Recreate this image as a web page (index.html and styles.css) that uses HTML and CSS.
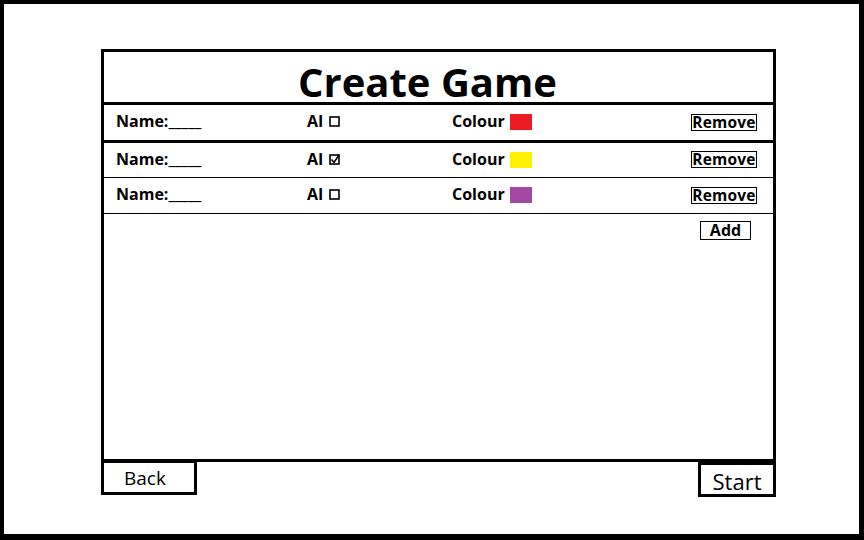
FILE: index.html
```html
<!DOCTYPE html>
<html>
<head>
<meta charset="utf-8">
<link rel="stylesheet" href="styles.css">
</head>
<body>
<div class="frame">
  <div class="panel">
    <div class="header"><h1 class="title">Create Game</h1></div>
    <div class="row row-first">
      <span class="name">Name:_____</span>
      <span class="ai">AI <svg class="cb" width="11" height="11" viewBox="0 0 11 11"><rect x="1" y="1" width="9" height="9" fill="none" stroke="#000" stroke-width="1.6"/></svg></span>
      <span class="colour">Colour <span class="swatch swatch-red"></span></span>
      <span class="btn-remove">Remove</span>
    </div>
    <div class="row row-second">
      <span class="name">Name:_____</span>
      <span class="ai">AI <svg class="cb" width="11" height="11" viewBox="0 0 11 11"><rect x="1" y="1" width="9" height="9" fill="none" stroke="#000" stroke-width="1.6"/><path d="M2.5 5.5 L5 8.5 L10 1" fill="none" stroke="#000" stroke-width="1.6"/></svg></span>
      <span class="colour">Colour <span class="swatch swatch-yellow"></span></span>
      <span class="btn-remove">Remove</span>
    </div>
    <div class="row row-third">
      <span class="name">Name:_____</span>
      <span class="ai">AI <svg class="cb" width="11" height="11" viewBox="0 0 11 11"><rect x="1" y="1" width="9" height="9" fill="none" stroke="#000" stroke-width="1.6"/></svg></span>
      <span class="colour">Colour <span class="swatch swatch-purple"></span></span>
      <span class="btn-remove">Remove</span>
    </div>
    <div class="actions"><span class="btn-add">Add</span></div>
  </div>
  <div class="footer">
    <div class="btn-back">Back</div>
    <div class="btn-start">Start</div>
  </div>
</div>
</body>
</html>
```
FILE: styles.css
```css
* { box-sizing: border-box; }
html, body { margin: 0; padding: 0; background: #fff; }
body { font-family: "Open Sans", "DejaVu Sans", sans-serif; color: #000; }

.frame {
  width: 864px;
  height: 540px;
  border-style: solid;
  border-color: #000;
  border-width: 4px 5px 6px 4px;
  padding: 45px 83px 0 97px;
}

.panel {
  width: 675px;
  height: 413px;
  border: 3px solid #000;
  display: flex;
  flex-direction: column;
}

.header {
  height: 53px;
  border-bottom: 3px solid #000;
  display: flex;
  align-items: center;
  justify-content: center;
  padding-right: 22px;
}
.title {
  margin: 0;
  font-size: 40px;
  font-weight: 700;
  line-height: 1;
  padding-top: 9px;
}

.row {
  display: flex;
  align-items: center;
  padding: 0 16px 3px 12px;
  font-size: 16px;
  font-weight: 700;
  border-bottom: 1px solid #000;
}
.row-first { height: 38px; border-bottom-width: 3px; }
.row-second { height: 35px; }
.row-third { height: 36px; }

.name { width: 191px; }
.ai { width: 145px; display: flex; align-items: center; }
.cb { margin-left: 6px; margin-top: 1px; }
.colour { flex: 1; display: flex; align-items: center; }
.swatch { display: inline-block; width: 22px; height: 16px; margin-left: 5px; margin-top: 2px; }
.swatch-red { background: #ed1c24; }
.swatch-yellow { background: #fff200; }
.swatch-purple { background: #a349a4; }

.btn-remove {
  width: 66px;
  height: 17px;
  margin-top: 2px;
  border: 1px solid #000;
  line-height: 14px;
  text-align: center;
  font-size: 15.5px;
  letter-spacing: 0.2px;
}

.actions {
  display: flex;
  justify-content: flex-end;
  padding: 7px 22px 0 0;
}
.btn-add {
  width: 51px;
  height: 19px;
  border: 1px solid #000;
  font-size: 16px;
  font-weight: 700;
  line-height: 16px;
  text-align: center;
}

.footer {
  width: 675px;
  display: flex;
  justify-content: space-between;
  align-items: flex-start;
}
.btn-back {
  margin-top: -2px;
  width: 96px;
  height: 35px;
  border: 3px solid #000;
  font-size: 19px;
  line-height: 31px;
  padding-left: 20px;
}
.btn-start {
  width: 78px;
  height: 35px;
  border: 3px solid #000;
  font-size: 22px;
  line-height: 33px;
  text-align: center;
}
```
